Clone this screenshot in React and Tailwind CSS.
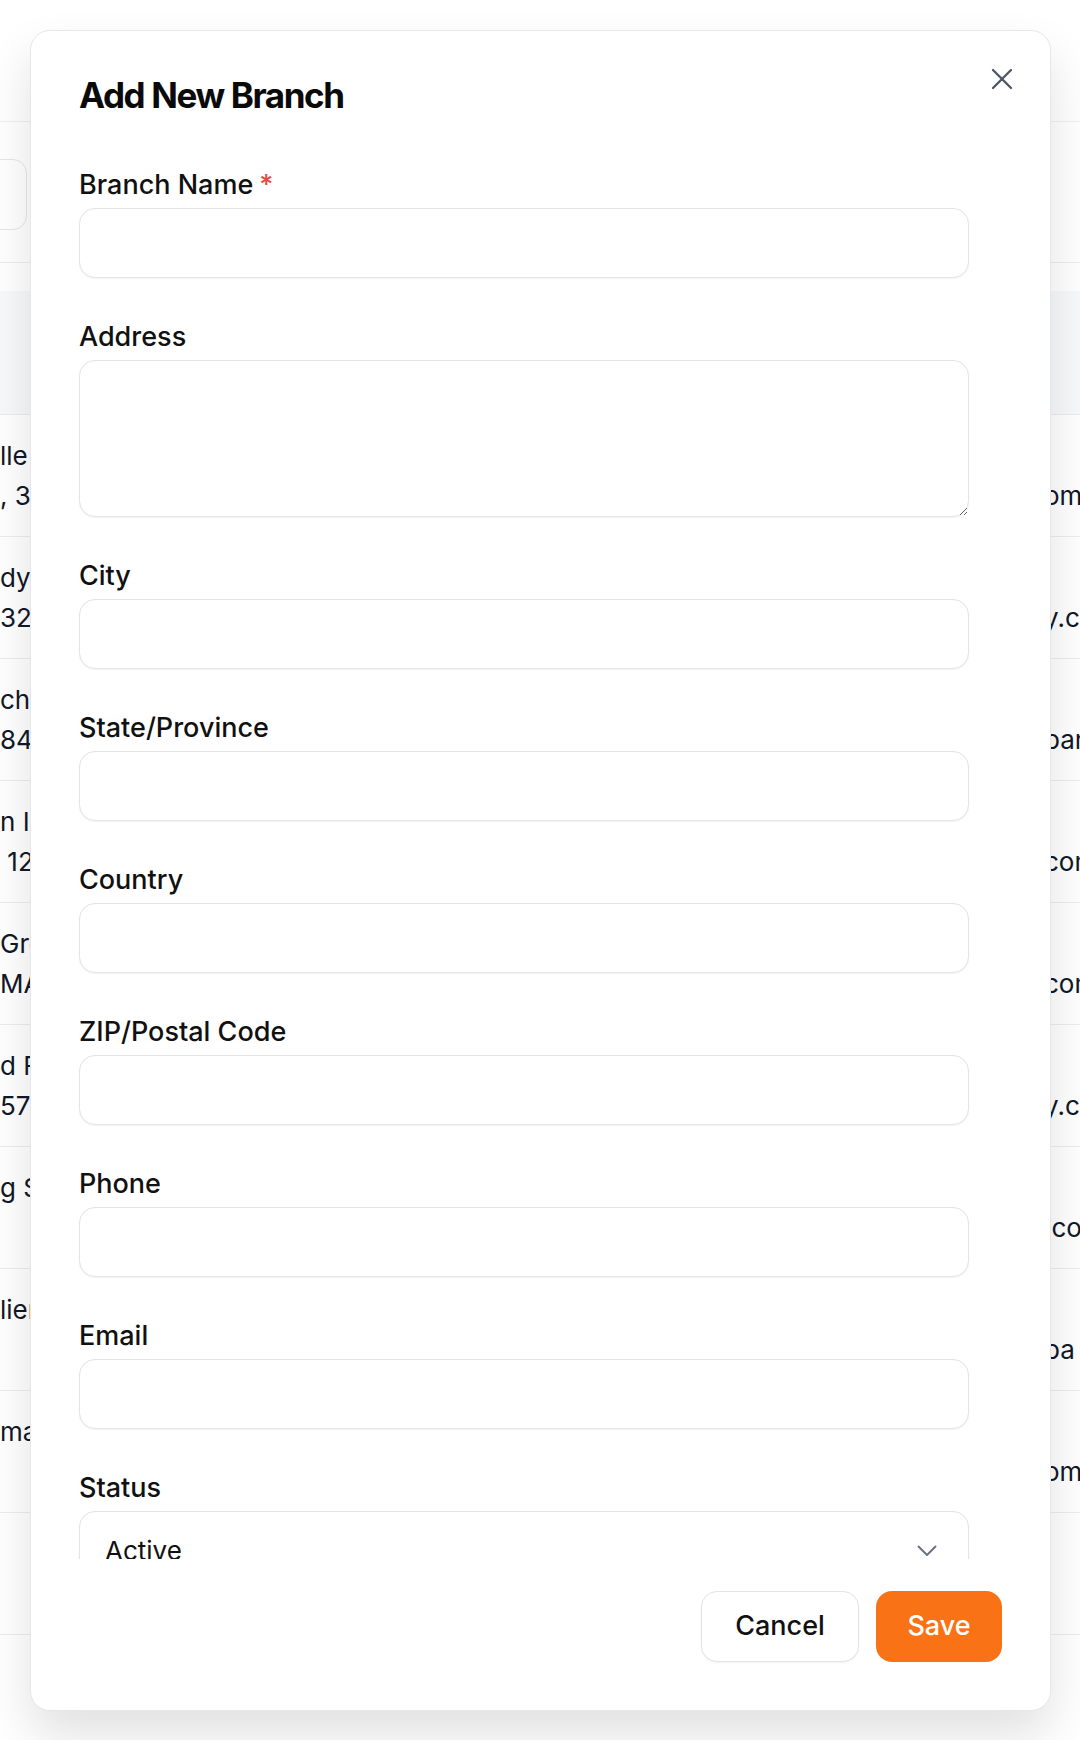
import { X } from 'lucide-react'

const fields = [
  { id: 'name', label: 'Branch Name', required: true },
  { id: 'address', label: 'Address', multiline: true },
  { id: 'city', label: 'City' },
  { id: 'state', label: 'State/Province' },
  { id: 'country', label: 'Country' },
  { id: 'zip', label: 'ZIP/Postal Code' },
  { id: 'phone', label: 'Phone' },
  { id: 'email', label: 'Email' },
]

const rows = [
  ['lle Ave', ', 32801', 'om'],
  ['dy Ln', '32904', 'y.com'],
  ['ch Rd', '84102', 'pany'],
  ['n Industrial', '\u00a012345', 'com'],
  ['Grove St', 'MA 02101', 'com'],
  ['d Farm Rd', '57901', 'y.com'],
  ['g St', '', '.com'],
  ['lier Rd', '', 'pa'],
  ['main St', '', 'om'],
  ['', '', ''],
]

function BackgroundPage() {
  return (
    <div className="w-full text-[26px] text-[#111827]">
      <div className="h-[122px] border-b border-[#f0f0f2] bg-white" />
      <div className="h-[141px] border-b border-[#ececef] pt-[37px]">
        <div className="-ml-[20px] h-[71px] w-[47px] rounded-[14px] border border-[#e5e7eb] bg-white" />
      </div>
      <div className="h-[28px]" />
      <div className="h-[123px] bg-[#f8f9fb]" />
      {rows.map((row, i) => (
        <div key={i} className="flex h-[122px] justify-between border-t border-[#ececef] leading-[40px] whitespace-nowrap">
          <div className="py-[21px]">
            <div>{row[0]}</div>
            <div>{row[1]}</div>
          </div>
          <div className="w-[36px] overflow-hidden py-[21px]">
            <div>&nbsp;</div>
            <div>{row[2]}</div>
          </div>
        </div>
      ))}
      <div className="border-t border-[#ececef]" />
    </div>
  )
}

function Field({ field }) {
  return (
    <div>
      <label htmlFor={field.id} className="mb-[4px] block text-[27px] leading-[38px] font-medium text-[#111111]">
        {field.label}
        {field.required && <span className="ml-[6px] text-[#ef4444]">*</span>}
      </label>
      {field.multiline ? (
        <textarea
          id={field.id}
          className="block h-[157px] w-full resize-y rounded-2xl border border-[#e4e4e7] bg-white shadow-[0_1px_2px_rgba(0,0,0,0.05)] outline-none"
        />
      ) : (
        <input
          id={field.id}
          className="block h-[70px] w-full rounded-2xl border border-[#e4e4e7] bg-white shadow-[0_1px_2px_rgba(0,0,0,0.05)] outline-none"
        />
      )}
    </div>
  )
}

export default function App() {
  return (
    <div className="relative h-[1740px] w-full overflow-hidden bg-white font-['Inter',sans-serif]">
      <BackgroundPage />

      <div className="absolute top-[30px] left-[30px] flex w-[1021px] flex-col rounded-[20px] border border-[#e5e7eb] bg-white shadow-[0_24px_48px_rgba(0,0,0,0.12)]">
        <div className="flex items-start justify-between pt-[42px] pr-[30px] pl-[48px]">
          <h2 className="text-[35px] leading-[44px] font-bold tracking-[-0.04em] text-[#0a0a0a]">
            Add New Branch
          </h2>
          <button className="-mt-[12px] flex h-[36px] w-[36px] items-center justify-center text-[#4b5563]">
            <X size={36} strokeWidth={1.5} />
          </button>
        </div>

        <div className="h-[1442px] overflow-hidden pt-[49px] pr-[81px] pl-[48px]">
          <div className="flex flex-col gap-[40px]">
            {fields.map((field) => (
              <Field key={field.id} field={field} />
            ))}
            <div>
              <div className="mb-[4px] text-[27px] leading-[38px] font-medium text-[#111111]">Status</div>
              <div className="flex h-[78px] items-center justify-between rounded-2xl border border-[#e4e4e7] bg-white pr-[31px] pl-[25px] shadow-[0_1px_2px_rgba(0,0,0,0.05)]">
                <span className="text-[26px] text-[#111111]">Active</span>
                <svg width="20" height="11" viewBox="0 0 20 11" fill="none">
                  <polyline points="1,1 10,10 19,1" stroke="#6b7280" strokeWidth="2" />
                </svg>
              </div>
            </div>
          </div>
        </div>

        <div className="flex justify-end gap-[17px] pt-[32px] pr-[48px] pb-[48px]">
          <button className="h-[71px] w-[158px] rounded-2xl border border-[#e4e4e7] bg-white text-[27px] font-medium text-[#111111] shadow-[0_1px_2px_rgba(0,0,0,0.05)]">
            Cancel
          </button>
          <button className="h-[71px] w-[126px] rounded-2xl bg-[#f97316] text-[27px] font-medium text-white">
            Save
          </button>
        </div>
      </div>
    </div>
  )
}
